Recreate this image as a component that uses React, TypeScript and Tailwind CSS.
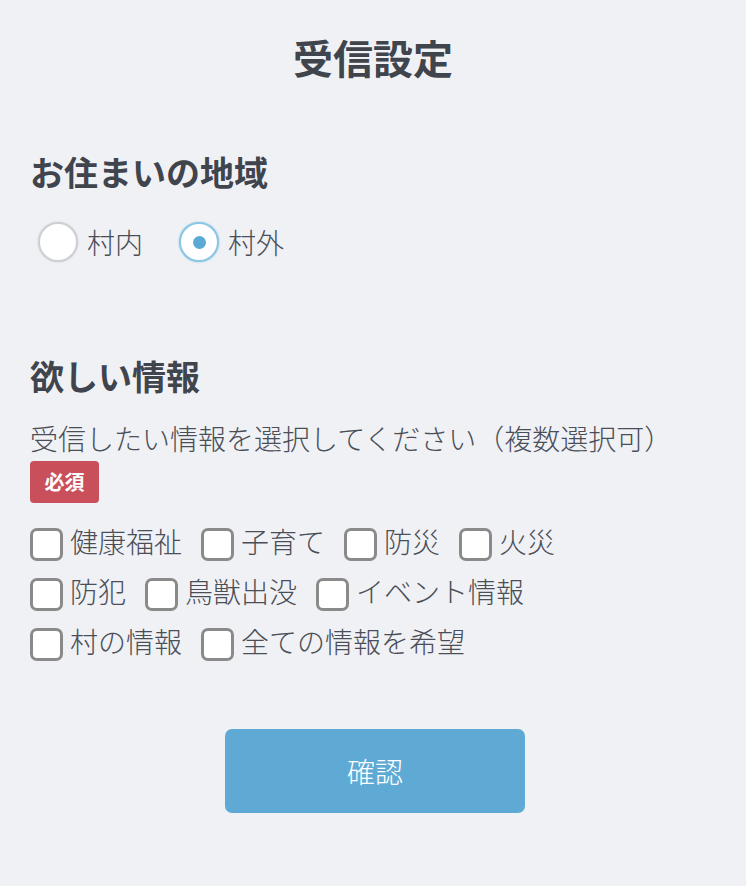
import { useState } from "react";

const FONT = { fontFamily: '"Noto Sans CJK JP", "Noto Sans", sans-serif' };

const topics = [
  "健康福祉",
  "子育て",
  "防災",
  "火災",
  "防犯",
  "鳥獣出没",
  "イベント情報",
  "村の情報",
  "全ての情報を希望",
];

const Radio = ({ label, checked, onClick }: { label: string; checked: boolean; onClick: () => void }) => (
  <button type="button" onClick={onClick} className="flex items-center mr-[36px]">
    <span
      className={
        checked
          ? "flex items-center justify-center w-[40px] h-[40px] rounded-full bg-white border-2 border-[#8cc6e5] shadow-[0_0_2px_#8cc6e5]"
          : "flex items-center justify-center w-[40px] h-[40px] rounded-full bg-white border-2 border-[#cdcfd4] shadow-[0_0_2px_#d0d2d6]"
      }
    >
      {checked && <span className="w-[13px] h-[13px] rounded-full bg-[#5aa9d6]" />}
    </span>
    <span className="ml-[9px] text-[28px] leading-[40px] font-light text-[#4a4e57]">{label}</span>
  </button>
);

const Check = ({ label, checked, onClick }: { label: string; checked: boolean; onClick: () => void }) => (
  <button type="button" onClick={onClick} className="flex items-center h-[50px] mr-[19px]">
    <span
      className={
        checked
          ? "w-[33px] h-[33px] translate-y-[3px] rounded-[7px] border-[3px] border-[#5aa9d6] bg-[#5aa9d6]"
          : "w-[33px] h-[33px] translate-y-[3px] rounded-[7px] border-[3px] border-[#8a8a8a] bg-white"
      }
    />
    <span className="ml-[7px] text-[28px] leading-[40px] font-light text-[#4a4e57]">{label}</span>
  </button>
);

export default function App() {
  const [area, setArea] = useState("村外");
  const [picked, setPicked] = useState<string[]>([]);

  const toggle = (t: string) =>
    setPicked((p) => (p.includes(t) ? p.filter((x) => x !== t) : [...p, t]));

  return (
    <div className="min-h-[886px] bg-[#f0f1f5] px-[30px]" style={FONT}>
      <h1 className="pt-[27px] text-center text-[40px] leading-[60px] font-bold text-[#40444d]">受信設定</h1>

      <h2 className="mt-[60px] text-[34px] leading-[50px] font-bold text-[#40444d]">お住まいの地域</h2>
      <div className="mt-[25px] flex pl-[8px]">
        <Radio label="村内" checked={area === "村内"} onClick={() => setArea("村内")} />
        <Radio label="村外" checked={area === "村外"} onClick={() => setArea("村外")} />
      </div>

      <h2 className="mt-[89px] text-[34px] leading-[50px] font-bold text-[#40444d]">欲しい情報</h2>
      <p className="mt-[17px] text-[28px] leading-[40px] font-light text-[#4a4e57]">
        受信したい情報を選択してください（複数選択可）
      </p>
      <span className="mt-[3px] inline-flex items-center justify-center w-[69px] h-[42px] rounded-[4px] bg-[#c9505a] text-white text-[20px] font-bold">
        必須
      </span>

      <div className="mt-[13px] flex flex-wrap max-w-[600px]">
        {topics.map((t) => (
          <Check key={t} label={t} checked={picked.includes(t)} onClick={() => toggle(t)} />
        ))}
      </div>

      <div className="mt-[63px] flex justify-center pl-[4px]">
        <button
          type="button"
          className="w-[300px] h-[84px] rounded-[7px] bg-[#5faad5] text-white text-[28px] font-light"
        >
          確認
        </button>
      </div>
    </div>
  );
}
